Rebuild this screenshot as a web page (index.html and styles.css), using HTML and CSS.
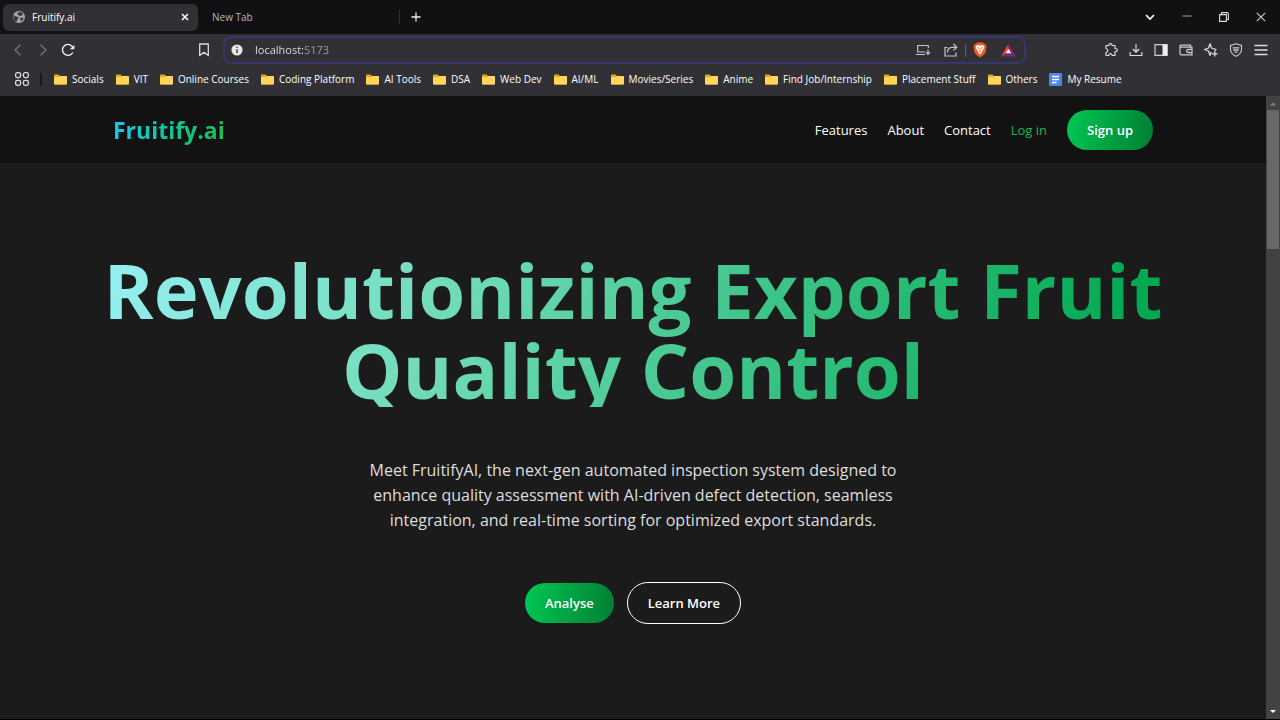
FILE: index.html
```html
<!DOCTYPE html>
<html lang="en">
<head>
<meta charset="utf-8">
<meta name="viewport" content="width=device-width, initial-scale=1">
<title>Fruitify.ai</title>
<link rel="stylesheet" href="styles.css">
</head>
<body>
<svg class="defs" aria-hidden="true">
  <symbol id="folder" viewBox="0 0 13 11"><path d="M0 1.500Q0 .5 1 .5H4.500L6 2H12Q13 2 13 3V9.500Q13 10.500 12 10.500H1Q0 10.500 0 9.500Z" fill="#e3a91b"/><path d="M0 4Q0 3 1 3H5L6.200 2H12Q13 2 13 3V9.500Q13 10.500 12 10.500H1Q0 10.500 0 9.500Z" fill="#ffd65a"/></symbol>
</svg>
<div class="browser">
  <div class="tabs">
    <div class="tab active">
      <svg width="12" height="12" viewBox="0 0 12 12"><circle cx="6" cy="6" r="6" fill="#a9a9ac"/><path d="M1 4L3 5.500 5.500 6 5 8 4 9.500 3 11Q0 9 .5 5ZM5 1.500L8 1 10 3 8.500 5 6 4.500 4 3ZM7 7L10 6.500 10.500 8 8 10.500Z" fill="#38383c"/></svg>
      <span class="tab-title">Fruitify.ai</span>
      <button class="icon small" aria-label="Close tab"><svg width="8" height="8" viewBox="0 0 8 8"><path d="M1 1L7 7M7 1L1 7" stroke="#fff" stroke-width="1.500"/></svg></button>
    </div>
    <div class="tab idle"><span class="tab-title">New Tab</span></div>
    <button class="icon" aria-label="New tab"><svg width="10" height="10" viewBox="0 0 10 10"><path d="M5 .5V9.500M.5 5H9.500" stroke="#eee" stroke-width="1.300"/></svg></button>
    <div class="window">
      <button class="icon" aria-label="Search tabs"><svg width="10" height="10" viewBox="0 0 10 10"><path d="M1 3L5 7 9 3" fill="none" stroke="#fff" stroke-width="1.600"/></svg></button>
      <button class="icon" aria-label="Minimize"><svg width="10" height="10" viewBox="0 0 10 10"><path d="M.5 4H9.500" stroke="#aaa"/></svg></button>
      <button class="icon" aria-label="Restore"><svg width="10" height="10" viewBox="0 0 10 10"><path d="M.6 2.600H7.400V9.400H.6ZM2.500 2V.6H8Q9.400.6 9.400 2V7.500H7.500" fill="none" stroke="#ddd" stroke-width="1.100"/></svg></button>
      <button class="icon" aria-label="Close"><svg width="10" height="10" viewBox="0 0 10 10"><path d="M.8.8L9.200 9.200M9.200.8L.8 9.200" stroke="#ccc" stroke-width="1.100"/></svg></button>
    </div>
  </div>
  <div class="toolbar">
    <div class="nav-tools">
      <button class="icon" aria-label="Back"><svg width="12" height="12" viewBox="0 0 12 12"><path d="M8.500.8L3 6 8.500 11.200" fill="none" stroke="#77777b" stroke-width="1.200"/></svg></button>
      <button class="icon" aria-label="Forward"><svg width="12" height="12" viewBox="0 0 12 12"><path d="M3.500.8L9 6 3.500 11.200" fill="none" stroke="#77777b" stroke-width="1.200"/></svg></button>
      <button class="icon" aria-label="Reload"><svg width="14" height="14" viewBox="0 0 14 14"><path d="M12.300 5.500A5.500 5.500 0 1 0 11.800 9.500" fill="none" stroke="#eee" stroke-width="1.400"/><path d="M8.800 6.200H13.400V2Z" fill="#eee"/></svg></button>
      <button class="icon last" aria-label="Bookmark this page"><svg width="12" height="14" viewBox="0 0 12 14"><path d="M1.700 1H10.300V12.500L6 9.300 1.700 12.500Z" fill="none" stroke="#ddd" stroke-width="1.300" stroke-linejoin="round"/></svg></button>
    </div>
    <div class="address">
      <svg width="12" height="12" viewBox="0 0 12 12"><circle cx="6" cy="6" r="5.600" fill="#e6e6e9"/><path d="M6 5.200V9" stroke="#333338" stroke-width="1.400"/><circle cx="6" cy="3.300" r=".8" fill="#333338"/></svg>
      <input class="url" type="text" value="localhost:5173" aria-label="Address">
      <button class="icon" aria-label="Install app"><svg width="15" height="12" viewBox="0 0 15 12"><path d="M9 8H1.700V1.500H12.300V4M0 10.500H9M12 5.500V10M10 8.200L12 10.300 14 8.200" fill="none" stroke="#c4c4c8" stroke-width="1.200"/></svg></button>
      <button class="icon" aria-label="Share"><svg width="14" height="14" viewBox="0 0 14 14"><path d="M3.500 4.500H1V13H12V9.500M3.500 9.500Q3.500 4.500 8 4.300H12.500M9.500 1L12.800 4.300 9.500 7.500" fill="none" stroke="#c4c4c8" stroke-width="1.200"/></svg></button>
      <span class="divider"></span>
      <button class="icon" aria-label="Shields"><svg width="14" height="16" viewBox="0 0 14 16"><path d="M4 .5H10L11.200 2 12.800 2.200 13.500 4.500 12.500 10.500Q11 13.500 7 15.500 3 13.500 1.500 10.500L.5 4.500 1.200 2.200 2.800 2Z" fill="#f15a24"/><path d="M3.300 3.600L5.500 3.300 7 3.700 8.500 3.300 10.700 3.600 11.300 5.700 9.600 8.500 9 10.200 7 12.500 5 10.200 4.400 8.500 2.700 5.700Z" fill="#fff"/><path d="M4.300 5.500L6 6.200 5.700 7.400M9.700 5.500L8 6.200 8.300 7.400M7 7V9M5.700 10L7 9.200 8.300 10" fill="none" stroke="#f15a24" stroke-width=".8"/></svg></button>
      <button class="icon" aria-label="Rewards"><svg width="15" height="13" viewBox="0 0 15 13"><path d="M7.500 0L0 12.500 7.500 8Z" fill="#ff4724"/><path d="M7.500 0L15 12.500 7.500 8Z" fill="#9e1f63"/><path d="M0 12.500H15L7.500 8Z" fill="#662d91"/><path d="M7.500 4.700L4.800 9.300H10.200Z" fill="#fff"/></svg></button>
    </div>
    <div class="extras">
      <button class="icon" aria-label="Extensions"><svg width="14" height="14" viewBox="0 0 14 14"><path d="M2 2.500H5Q4.800.7 6.500.7T8 2.500H11V5.500Q13.300 5.300 13.300 7T11 8.500V12.500H8.200Q8 10.700 6.500 10.700T4.800 12.500H2V9.500Q3.800 9 3.800 7.500T2 5.500Z" fill="none" stroke="#ddd" stroke-width="1.200" stroke-linejoin="round"/></svg></button>
      <button class="icon" aria-label="Downloads"><svg width="14" height="14" viewBox="0 0 14 14"><path d="M7 1V9M3.800 6L7 9.200 10.200 6M1.200 9V12.500H12.800V9" fill="none" stroke="#ddd" stroke-width="1.200"/></svg></button>
      <button class="icon" aria-label="Sidebar"><svg width="14" height="14" viewBox="0 0 14 14"><path d="M1 1.700H13V12.300H1Z" fill="none" stroke="#ccc" stroke-width="1.200"/><path d="M8.500 1.500H13.500V12.500H8.500Z" fill="#eee"/></svg></button>
      <button class="icon" aria-label="Wallet"><svg width="14" height="14" viewBox="0 0 14 14"><path d="M11.500 4V2.200H2Q1 2.200 1 3.200V10.800Q1 11.800 2 11.800H13V4.200H1M13 6.300H9Q7.500 6.500 7.500 8T9 9.700H13M9.500 8H10.500" fill="none" stroke="#ccc" stroke-width="1.200"/></svg></button>
      <button class="icon" aria-label="Leo AI"><svg width="14" height="14" viewBox="0 0 14 14"><path d="M10.500 7.500L12 6.500 7.500 5 6 .8 4.500 5 .5 6.500 4.500 8 6 12.300 7.300 9M10.800 8V13.500M8 10.800H13.500" fill="none" stroke="#ddd" stroke-width="1.300" stroke-linejoin="round"/></svg></button>
      <button class="icon" aria-label="VPN"><svg width="14" height="14" viewBox="0 0 14 14"><path d="M7 .8L12.500 2.500V7Q12 11 7 13.300 2 11 1.500 7V2.500Z" fill="none" stroke="#ccc" stroke-width="1.100"/><path d="M3.700 4.800H10.300M4.300 7H9.700M5.500 9.200H8.500" stroke="#ccc" stroke-width="1.300"/></svg></button>
      <button class="icon" aria-label="Menu"><svg width="14" height="14" viewBox="0 0 14 14"><path d="M.5 2.500H13.500M.5 7H13.500M.5 11.500H13.500" stroke="#ddd" stroke-width="1.300"/></svg></button>
    </div>
  </div>
  <nav class="bookmarks" aria-label="Bookmarks">
    <button class="icon" aria-label="All bookmarks"><svg width="16" height="16" viewBox="0 0 16 16"><g fill="none" stroke="#ddd" stroke-width="1.300"><rect x="1.600" y="1.600" width="5" height="5" rx="1.800"/><rect x="9.400" y="1.600" width="5" height="5" rx="1.800"/><rect x="1.600" y="9.400" width="5" height="5" rx="1.800"/><rect x="9.400" y="9.400" width="5" height="5" rx="1.800"/></g></svg></button>
    <span class="divider dark"></span>
    <a href="#"><svg class="folder"><use href="#folder"/></svg>Socials</a>
    <a href="#"><svg class="folder"><use href="#folder"/></svg>VIT</a>
    <a href="#"><svg class="folder"><use href="#folder"/></svg>Online Courses</a>
    <a href="#"><svg class="folder"><use href="#folder"/></svg>Coding Platform</a>
    <a href="#"><svg class="folder"><use href="#folder"/></svg>AI Tools</a>
    <a href="#"><svg class="folder"><use href="#folder"/></svg>DSA</a>
    <a href="#"><svg class="folder"><use href="#folder"/></svg>Web Dev</a>
    <a href="#"><svg class="folder"><use href="#folder"/></svg>AI/ML</a>
    <a href="#"><svg class="folder"><use href="#folder"/></svg>Movies/Series</a>
    <a href="#"><svg class="folder"><use href="#folder"/></svg>Anime</a>
    <a href="#"><svg class="folder"><use href="#folder"/></svg>Find Job/Internship</a>
    <a href="#"><svg class="folder"><use href="#folder"/></svg>Placement Stuff</a>
    <a href="#"><svg class="folder"><use href="#folder"/></svg>Others</a>
    <a href="#"><svg width="13" height="13" viewBox="0 0 13 13"><rect width="13" height="13" rx="1" fill="#4a86ee"/><path d="M3 3.500H10M3 6.500H10M3 9.500H7.500" stroke="#fff" stroke-width="1.300"/></svg>My Resume</a>
  </nav>
</div>
<div class="viewport">
  <div class="page">
    <header class="site-header">
      <a class="logo" href="#">Fruitify.ai</a>
      <nav class="site-nav">
        <a href="#">Features</a>
        <a href="#">About</a>
        <a href="#">Contact</a>
        <a class="login" href="#">Log in</a>
        <button class="pill filled">Sign up</button>
      </nav>
    </header>
    <main class="hero">
      <h1>Revolutionizing Export Fruit Quality Control</h1>
      <p>Meet FruitifyAI, the next-gen automated inspection system designed to enhance quality assessment with AI-driven defect detection, seamless integration, and real-time sorting for optimized export standards.</p>
      <div class="actions">
        <button class="pill filled">Analyse</button>
        <button class="pill outline">Learn More</button>
      </div>
    </main>
  </div>
  <div class="scrollbar" aria-hidden="true">
    <svg width="14" height="14" viewBox="0 0 14 14"><path d="M4 9.500L7 6.500 10 9.500Z" fill="#858585"/></svg>
    <div class="thumb"></div>
    <svg class="down" width="14" height="14" viewBox="0 0 14 14"><path d="M4 5L7 8 10 5Z" fill="#fff"/></svg>
  </div>
</div>
</body>
</html>
```
FILE: styles.css
```css
* { box-sizing: border-box; }

body {
  margin: 0;
  min-height: 100vh;
  display: flex;
  flex-direction: column;
  background: #1b1b1b;
  color: #fff;
  font-family: "Segoe UI", "Open Sans", "Noto Sans", sans-serif;
}

a { color: inherit; text-decoration: none; white-space: nowrap; }
button { font-family: inherit; color: inherit; cursor: pointer; }
svg { display: block; flex: none; }
.defs { position: absolute; width: 0; height: 0; }

.icon {
  display: grid;
  place-items: center;
  flex: none;
  width: 25px;
  height: 24px;
  padding: 0;
  border: 0;
  background: none;
}
.icon.small { width: 14px; height: 14px; }

.browser { background: #313135; font-size: 10px; line-height: 16px; }

.tabs {
  display: flex;
  align-items: center;
  height: 34px;
  padding: 0 7px 0 3px;
  background: #111113;
}
.tab { display: flex; align-items: center; gap: 7px; height: 27px; }
.tab.active { width: 195px; padding: 0 6px 0 10px; border-radius: 6px; background: #313135; }
.tab.idle { width: 202px; padding-left: 14px; color: #b5b5b8; }
.tab.idle::after { content: ""; width: 1px; height: 14px; background: #303034; }
.tab-title { flex: 1; }
.tabs > .icon { margin-left: 3px; }
.window { display: flex; gap: 12px; margin-left: auto; }

.toolbar {
  display: grid;
  grid-template-columns: 218px 1fr 247px;
  align-items: center;
  padding: 2px 7px 2px 5px;
}
.nav-tools, .extras { display: flex; align-items: center; }
.nav-tools .last { margin-left: auto; margin-right: 7px; }
.extras { justify-content: flex-end; }
.address {
  display: flex;
  align-items: center;
  height: 28px;
  padding: 0 2px 0 6px;
  border: 2px solid #37346e;
  border-radius: 8px;
  background: #313135;
}
.url {
  flex: 1;
  min-width: 0;
  margin-left: 12px;
  padding: 0;
  border: 0;
  outline: 0;
  font: 11px/20px "Segoe UI", "Open Sans", "Noto Sans", sans-serif;
  color: transparent;
  background: linear-gradient(90deg, #e6e6ea 49px, #a0a0a4 49px);
  background-clip: text;
  -webkit-background-clip: text;
}
.address .icon { width: 28px; }
.divider { width: 1px; height: 13px; background: #626266; }
.divider.dark { width: 2px; background: #1b1b1e; }

.bookmarks {
  display: flex;
  align-items: center;
  gap: 12px;
  height: 30px;
  padding: 0 9px 4px;
}
.bookmarks a { display: flex; align-items: center; gap: 5px; }
.bookmarks .divider { margin-left: -6px; }
.folder { width: 13px; height: 11px; }

.viewport { flex: 1; display: flex; border-bottom: 1px solid #000; }
.page { flex: 1; min-width: 0; }

.site-header {
  display: flex;
  align-items: center;
  justify-content: space-between;
  padding: 14px 113px 13px;
  border-bottom: 1px solid #202020;
  background: #121212;
}
.logo {
  font-size: 23px;
  font-weight: 700;
  line-height: 32px;
  color: transparent;
  background: linear-gradient(90deg, #1cc8ec, #0dc79a 50%, #19c250);
  background-clip: text;
  -webkit-background-clip: text;
}
.site-nav { display: flex; align-items: center; gap: 20px; font-size: 13px; font-weight: 500; }
.login { color: #16b84a; font-weight: 400; }

.pill {
  padding: 10px 20px;
  border: 0;
  border-radius: 21px;
  font-size: 13px;
  font-weight: 600;
  line-height: 20px;
}
.filled { background: linear-gradient(100deg, #00c853, #007e33); }
.outline { border: 1px solid #fff; background: none; }

.hero { display: flex; flex-direction: column; align-items: center; padding: 86px 90px; text-align: center; }
h1 {
  max-width: 1080px;
  margin: 0;
  font-size: 76px;
  font-weight: 700;
  line-height: 80px;
  color: transparent;
  background: linear-gradient(110deg, #96f1f4, #71dbb8 33%, #00a84f 95%) 0 0 / 100% 157px no-repeat;
  background-clip: text;
  -webkit-background-clip: text;
}
.hero p {
  max-width: 560px;
  margin: 48px 0 49px;
  font-size: 16px;
  line-height: 25px;
  color: #dedede;
}
.actions { display: flex; align-items: center; gap: 13px; }

.scrollbar { display: flex; flex-direction: column; width: 14px; background: #424242; }
.thumb { height: 139px; margin: 0 1px; background: #686868; }
.down { margin-top: auto; }
```
